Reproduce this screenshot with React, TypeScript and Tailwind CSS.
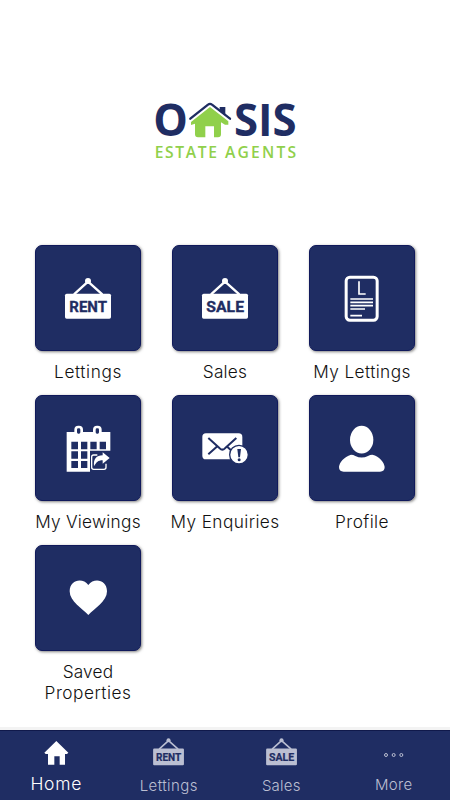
import type { ReactNode } from "react";

const NAVY = "#1f2d63";
const FONT = "Inter, 'Open Sans', sans-serif";

function Sign({ text }: { text: string }) {
  return (
    <g>
      <path d="M132 163 L174 125 L217 163" fill="none" stroke="currentColor" strokeWidth="7" />
      <circle cx="174" cy="123" r="9" fill="currentColor" />
      <rect x="105" y="161" width="138" height="75" rx="5" fill="currentColor" />
      <text x="118" y="216" fill={NAVY} fontFamily="Roboto, 'Liberation Sans', sans-serif" fontWeight="700" fontSize="45" textLength="113" lengthAdjust="spacingAndGlyphs" stroke={NAVY} strokeWidth="1">
        {text}
      </text>
    </g>
  );
}

function Certificate() {
  return (
    <g fill="none" stroke="white" transform="translate(-12 0)">
      <rect x="138.500" y="111.500" width="93" height="129" rx="11" strokeWidth="9" />
      <path d="M177 124 V162 H197" strokeWidth="5" />
      <path d="M151 177 H219 M151 187 H219 M151 197 H219 M151 207 H195 M151 227 H186" strokeWidth="5" />
    </g>
  );
}

function Calendar() {
  return (
    <g>
      <path d="M110 126 H241 V182 H180 V245 H110 Z" fill="white" />
      <g fill={NAVY} stroke="white" strokeWidth="8">
        <rect x="137" y="111" width="18" height="24" rx="8" />
        <rect x="193" y="111" width="18" height="24" rx="8" />
      </g>
      <path d="M124 155h20v23h-20z M153 155h19v23h-19z M181 155h19v23h-19z M209 155h19v23h-19z M124 184h20v22h-20z M153 184h19v22h-19z M124 213h20v21h-20z M153 213h19v21h-19z" fill={NAVY} />
      <path d="M202 195 H191 Q185 195 185 201 V232 Q185 238 191 238 H222 Q228 238 228 232 V221" fill="none" stroke="white" strokeWidth="4" />
      <path d="M192 229 C190 206 199 197 218 196 V187 L239 204 L218 221 V211 C204 211 199 217 192 229 Z" fill="white" />
    </g>
  );
}

function Envelope() {
  return (
    <g transform="translate(-5 0)">
      <rect x="111" y="130" width="120" height="78" rx="11" fill="white" />
      <path d="M129 144 L163 175 Q171 183 179 175 L213 144 M156 169 L129 193 M184 169 L207 190" fill="none" stroke={NAVY} strokeWidth="6" />
      <circle cx="221" cy="194" r="28" fill="white" stroke={NAVY} strokeWidth="4" />
      <path d="M216 177 H227 L224 202 H219 Z" fill={NAVY} />
      <circle cx="221.500" cy="209" r="4.500" fill={NAVY} />
    </g>
  );
}

function Person() {
  return (
    <g fill="white" transform="translate(-12 0)">
      <ellipse cx="185" cy="149" rx="35" ry="41.500" />
      <path d="M153 194 Q160 194 166 198 Q185 207 204 198 Q210 194 217 194 C239 199 253 218 254 231 Q254 245 240 245 H131 Q117 245 117 231 C118 218 132 200 153 194 Z" />
    </g>
  );
}

function Heart() {
  return <path d="M175 225 C157 206 119 184 119 154 C119 119 158 112 175 135 C192 112 231 119 231 154 C231 184 193 206 175 225 Z" fill="white" />;
}

function Tile({ icon, children, labelClass }: { icon: ReactNode; children: ReactNode; labelClass: string }) {
  return (
    <div className="flex h-[150px] flex-col items-center">
      <button className="h-[106px] w-[106px] shrink-0 rounded-[7px] border border-[#10195b] bg-[#1f2d63] text-white shadow-[1px_1px_3px_rgba(0,0,0,0.5)]">
        <svg viewBox="15 15 318 318" className="-m-px h-[106px] w-[106px]">{icon}</svg>
      </button>
      <span className={"mt-[10px] whitespace-nowrap text-center text-[17.25px] leading-[21px] font-light text-[#111] " + labelClass}>{children}</span>
    </div>
  );
}

function NavItem({ icon, label, className }: { icon: ReactNode; label: string; className: string }) {
  return (
    <button className="flex flex-col items-center text-[#bbbfd2]">
      <svg viewBox="0 0 135 126" className="h-[42px] w-[45px]">{icon}</svg>
      <span className={"whitespace-nowrap font-light leading-5 " + className}>{label}</span>
    </button>
  );
}

function Logo() {
  return (
    <svg viewBox="0 0 480 210" className="h-[70px] w-[160px] overflow-visible">
      <g fontFamily="'Open Sans', sans-serif" fontWeight="700" fill={NAVY}>
        <text x="25" y="124" fontSize="136" textLength="104" lengthAdjust="spacingAndGlyphs">O</text>
        <text x="267" y="124" fontSize="136" textLength="188" lengthAdjust="spacingAndGlyphs">SIS</text>
      </g>
      <path d="M195 36 L250 79 V89 H240 L228 82 V118 Q228 127 219 127 H207 V94 H181 V127 H159 Q150 127 150 118 V86 L138 90 V81 Z" fill="#90d04b" />
      <path d="M136 71 L189 29 Q195 24 201 29 L255 71" fill="none" stroke={NAVY} strokeWidth="7" strokeLinecap="round" />
      <path d="M224 36 H241 V62 L224 49 Z" fill={NAVY} />
      <text x="29" y="188" fill="#90d04b" fontFamily="'Open Sans', sans-serif" fontWeight="600" fontSize="47" textLength="187" lengthAdjust="spacing">ESTATE</text>
      <text x="240" y="188" fill="#90d04b" fontFamily="'Open Sans', sans-serif" fontWeight="600" fontSize="47" textLength="213" lengthAdjust="spacing">AGENTS</text>
    </svg>
  );
}

export default function App() {
  return (
    <main className="flex h-[800px] w-[450px] flex-col overflow-hidden bg-white" style={{ fontFamily: FONT }}>
      <header className="flex h-[245px] shrink-0 items-start justify-center pt-[95px]">
        <Logo />
      </header>
      <section className="grid grow grid-cols-[106px_106px_106px] content-start gap-x-[31px] pl-[35px]">
        <Tile icon={<Sign text="RENT" />} labelClass="tracking-[0.6px]">Lettings</Tile>
        <Tile icon={<Sign text="SALE" />} labelClass="tracking-[0.2px]">Sales</Tile>
        <Tile icon={<Certificate />} labelClass="tracking-[0.4px]">My Lettings</Tile>
        <Tile icon={<Calendar />} labelClass="tracking-[0.25px]">My Viewings</Tile>
        <Tile icon={<Envelope />} labelClass="tracking-[0.4px]">My Enquiries</Tile>
        <Tile icon={<Person />} labelClass="tracking-[0.4px]">Profile</Tile>
        <Tile icon={<Heart />} labelClass="tracking-[0.2px]">Saved<br /><span className="tracking-[0.5px]">Properties</span></Tile>
      </section>
      <div className="h-[3px] shrink-0 bg-[#f3f3f3]" />
      <nav className="grid h-[70px] shrink-0 grid-cols-4 items-start border-t border-[#10194b] bg-[#1f2d63]">
        <NavItem className="mt-[1px] text-[17.5px] tracking-[0.7px] text-white" label="Home" icon={<path d="M67 30 L103 65 L99 69 H93 V101 H77 V76 H61 V101 H42 V69 H35 L31 65 Z" fill="white" />} />
        <NavItem className="mt-[3px] text-[15px] tracking-[0.4px]" label="Lettings" icon={<g transform="translate(-49 -55) scale(0.67)"><Sign text="RENT" /></g>} />
        <NavItem className="mt-[3px] text-[15px] tracking-[0.2px]" label="Sales" icon={<g transform="translate(-49 -55) scale(0.67)"><Sign text="SALE" /></g>} />
        <NavItem className="mt-[2px] text-[15px] tracking-[0.3px]" label="More" icon={<g fill="none" stroke="currentColor" strokeWidth="3"><circle cx="45" cy="72" r="4.500" /><circle cx="68" cy="72" r="4.500" /><circle cx="91" cy="72" r="4.500" /></g>} />
      </nav>
    </main>
  );
}
